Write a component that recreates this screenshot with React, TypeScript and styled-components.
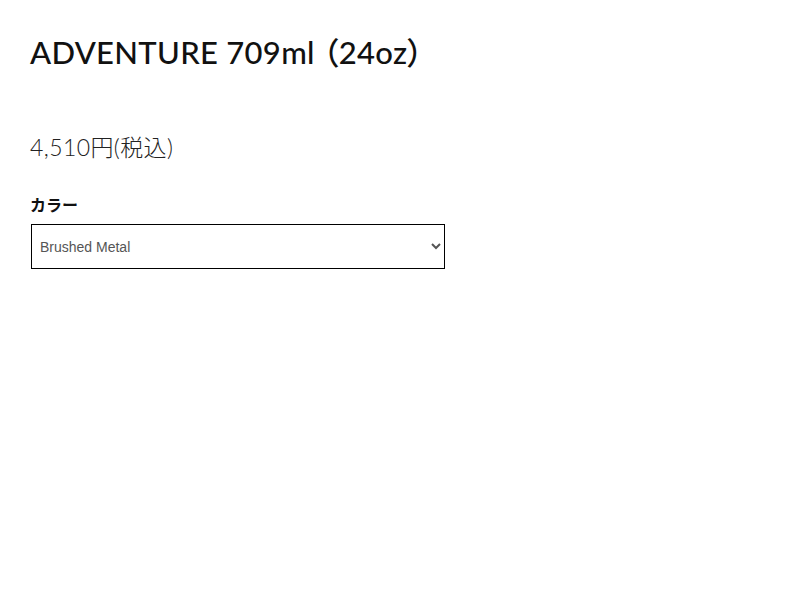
import React from "react";
import styled, { createGlobalStyle } from "styled-components";

const Global = createGlobalStyle`
  html, body { margin: 0; padding: 0; background: #fff; }
  body { font-family: Lato, "Noto Sans CJK JP", sans-serif; color: #111; }
`;

const Page = styled.main`
  padding: 30px 30px 0 30px;
  display: flex;
  flex-direction: column;
`;

const Title = styled.h1`
  margin: 0;
  font-family: Lato, "Noto Sans CJK JP", sans-serif;
  font-size: 31px;
  font-weight: 500;
  line-height: 44px;
  letter-spacing: 0.3px;
  font-feature-settings: "palt";
  color: #111;
`;

const Price = styled.p`
  margin: 57px 0 0 0;
  font-family: Lato, "Noto Sans CJK JP", sans-serif;
  font-weight: 300;
  font-size: 23px;
  line-height: 32px;
  letter-spacing: 0.4px;
  color: #222;
`;

const Label = styled.label`
  margin-top: 30px;
  font-family: "Noto Sans CJK JP", sans-serif;
  font-weight: 700;
  font-size: 16px;
  line-height: 22px;
  color: #111;
`;

const Select = styled.select`
  margin: 9px 0 0 1px;
  width: 414px;
  height: 45px;
  border: 1px solid #000;
  border-radius: 0;
  background: #fff;
  padding: 0 6px 0 4px;
  font-family: "Liberation Sans", Arial, sans-serif;
  font-size: 14px;
  color: #555;
  outline: none;
`;

export default function App() {
  return (
    <>
      <Global />
      <Page>
        <Title>ADVENTURE 709ml （24oz）</Title>
        <Price>4,510円(税込)</Price>
        <Label htmlFor="color">カラー</Label>
        <Select id="color" defaultValue="Brushed Metal">
          <option>Brushed Metal</option>
        </Select>
      </Page>
    </>
  );
}
